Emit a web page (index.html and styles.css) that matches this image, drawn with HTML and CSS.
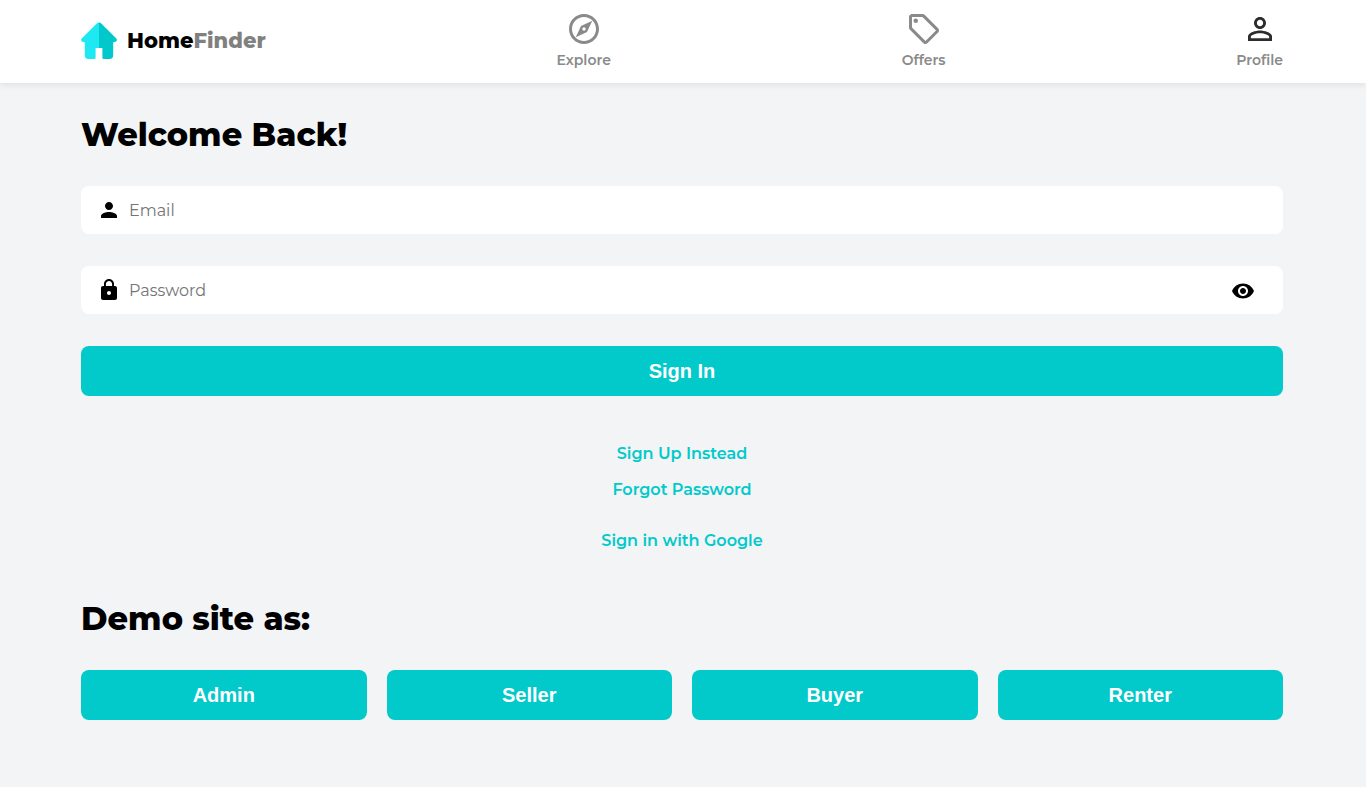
FILE: index.html
```html
<!DOCTYPE html>
<html lang="en">
<head>
<meta charset="utf-8">
<meta name="viewport" content="width=device-width, initial-scale=1">
<title>HomeFinder</title>
<link rel="stylesheet" href="styles.css">
</head>
<body>
<header class="site-header">
  <a class="brand" href="#">
    <svg class="brand-icon" viewBox="0 0 36 38" aria-hidden="true">
      <path fill="#1ee9f3" d="M18 .6c-1 0-1.800.4-2.500 1.100L.9 16.300c-1.300 1.300-.9 3 .6 3.500.7.3 1.400.4 2.300.4V33.500c0 2.200 1.400 3.500 3.500 3.500H13c1 0 1.600-.6 1.600-1.600v-9.300H18z"/>
      <path fill="#03c8cb" d="M18 .6c1 0 1.800.4 2.500 1.100l14.600 14.600c1.300 1.300.9 3-.6 3.500-.7.3-1.400.4-2.300.4V33.500c0 2.200-1.400 3.500-3.500 3.500H23c-1 0-1.600-.6-1.600-1.600v-9.300H18z"/>
    </svg>
    <span class="brand-name">Home<span class="brand-accent">Finder</span></span>
  </a>
  <a class="nav-link" href="#">
    <svg class="nav-icon" viewBox="0 0 24 24" aria-hidden="true"><path d="M12 2C6.480 2 2 6.480 2 12s4.480 10 10 10 10-4.480 10-10S17.520 2 12 2zm0 18c-4.410 0-8-3.590-8-8s3.590-8 8-8 8 3.590 8 8-3.590 8-8 8zm-5.500-2.500 7.510-3.490L17.500 6.500 9.990 9.990 6.500 17.500zm5.500-6.600c.61 0 1.100.49 1.100 1.100s-.49 1.100-1.100 1.100-1.100-.49-1.100-1.100.49-1.100 1.100-1.100z"/></svg>
    <span>Explore</span>
  </a>
  <a class="nav-link" href="#">
    <svg class="nav-icon" viewBox="0 0 24 24" aria-hidden="true"><path d="M21.410 11.580l-9-9C12.050 2.220 11.550 2 11 2H4c-1.100 0-2 .9-2 2v7c0 .55.22 1.050.59 1.420l9 9c.36.36.86.58 1.410.58s1.050-.22 1.410-.59l7-7c.37-.36.59-.86.59-1.410s-.23-1.060-.59-1.420zM13 20.010L4 11V4h7v-.01l9 9-7 7.020z"/><circle cx="6.500" cy="6.500" r="1.500"/></svg>
    <span>Offers</span>
  </a>
  <a class="nav-link" href="#" aria-current="page">
    <svg class="nav-icon nav-icon-active" viewBox="0 0 24 24" aria-hidden="true"><path d="M12 5.900c1.160 0 2.100.94 2.100 2.100s-.94 2.100-2.100 2.100S9.900 9.160 9.900 8s.94-2.100 2.100-2.100m0 9c2.970 0 6.100 1.460 6.100 2.100v1.100H5.900V17c0-.64 3.130-2.100 6.100-2.100M12 4C9.790 4 8 5.790 8 8s1.790 4 4 4 4-1.790 4-4-1.790-4-4-4zm0 9c-2.670 0-8 1.340-8 4v3h16v-3c0-2.660-5.330-4-8-4z"/></svg>
    <span>Profile</span>
  </a>
</header>

<main class="page">
  <h1 class="heading">Welcome Back!</h1>
  <form class="login">
    <div class="field">
      <svg class="field-icon" viewBox="0 0 24 24" aria-hidden="true"><path d="M12 12c2.210 0 4-1.790 4-4s-1.790-4-4-4-4 1.790-4 4 1.790 4 4 4zm0 2c-2.670 0-8 1.340-8 4v2h16v-2c0-2.660-5.330-4-8-4z"/></svg>
      <input class="field-input" type="email" placeholder="Email" aria-label="Email">
    </div>
    <div class="field">
      <svg class="field-icon" viewBox="0 0 24 24" aria-hidden="true"><path d="M18 8h-1V6c0-2.760-2.240-5-5-5S7 3.240 7 6v2H6c-1.100 0-2 .9-2 2v10c0 1.100.9 2 2 2h12c1.100 0 2-.9 2-2V10c0-1.100-.9-2-2-2zm-6 9c-1.100 0-2-.9-2-2s.9-2 2-2 2 .9 2 2-.9 2-2 2zm3.100-9H8.900V6c0-1.710 1.390-3.100 3.100-3.100s3.100 1.390 3.100 3.100v2z"/></svg>
      <input class="field-input" type="password" placeholder="Password" aria-label="Password">
      <button class="reveal" type="button" aria-label="Show password">
        <svg class="field-icon" viewBox="0 0 24 24" aria-hidden="true"><path d="M12 4.500C7 4.500 2.730 7.610 1 12c1.730 4.390 6 7.500 11 7.500s9.270-3.110 11-7.500c-1.730-4.390-6-7.500-11-7.500zM12 17c-2.760 0-5-2.240-5-5s2.240-5 5-5 5 2.240 5 5-2.240 5-5 5zm0-8c-1.660 0-3 1.340-3 3s1.340 3 3 3 3-1.340 3-3-1.340-3-3-3z"/></svg>
      </button>
    </div>
    <button class="button" type="submit">Sign In</button>
  </form>
  <div class="links">
    <a class="link" href="#">Sign Up Instead</a>
    <a class="link" href="#">Forgot Password</a>
    <a class="link link-google" href="#">Sign in with Google</a>
  </div>
  <h2 class="heading">Demo site as:</h2>
  <div class="demo">
    <button class="button" type="button">Admin</button>
    <button class="button" type="button">Seller</button>
    <button class="button" type="button">Buyer</button>
    <button class="button" type="button">Renter</button>
  </div>
</main>
</body>
</html>
```
FILE: styles.css
```css
* {
  box-sizing: border-box;
}

body {
  margin: 0;
  background: #f2f4f6;
  color: #000;
  font-family: Montserrat, Inter, sans-serif;
}

a {
  text-decoration: none;
}

svg {
  display: block;
  fill: currentColor;
}

.site-header {
  display: flex;
  justify-content: space-between;
  align-items: center;
  padding: 11px 83px 13px 81px;
  background: #fff;
  box-shadow: 0 2px 6px rgba(0, 0, 0, 0.08);
}

.brand {
  display: flex;
  align-items: center;
  gap: 10px;
  color: #000;
}

.brand-icon {
  width: 36px;
  height: 38px;
}

.brand-name {
  font-size: 21px;
  line-height: 28px;
  font-weight: 800;
}

.brand-accent {
  color: #808080;
}

.nav-link {
  display: flex;
  flex-direction: column;
  align-items: center;
  gap: 3px;
  color: #8a8a8a;
  font-size: 14px;
  line-height: 20px;
  font-weight: 600;
}

.nav-icon {
  width: 36px;
  height: 36px;
}

.nav-icon-active {
  color: #2c2c2c;
}

.page {
  padding: 32px 83px 67px 81px;
}

.heading {
  margin: 0 0 31px;
  font-size: 32px;
  line-height: 40px;
  font-weight: 800;
}

.login {
  display: flex;
  flex-direction: column;
  gap: 32px;
}

.field {
  display: flex;
  align-items: center;
  gap: 8px;
  height: 48px;
  padding: 0 28px 0 16px;
  border-radius: 8px;
  background: #fff;
}

.field-icon {
  flex: none;
  width: 24px;
  height: 24px;
}

.field-input {
  flex: 1;
  min-width: 0;
  height: 48px;
  padding: 0;
  border: 0;
  outline: 0;
  background: transparent;
  font-family: inherit;
  font-size: 16px;
}

.field-input::placeholder {
  color: #757575;
}

.reveal {
  padding: 2px 0 0;
  border: 0;
  background: transparent;
  color: #000;
  cursor: pointer;
}

.button {
  height: 50px;
  padding: 0 16px;
  border: 0;
  border-radius: 8px;
  background: #02c9ca;
  color: #fff;
  font-family: "Liberation Sans", Arial, sans-serif;
  font-size: 20px;
  font-weight: 700;
  cursor: pointer;
}

.links {
  display: flex;
  flex-direction: column;
  align-items: center;
  gap: 12px;
  margin: 46px 0;
}

.link {
  color: #02c9ca;
  font-size: 16px;
  line-height: 24px;
  font-weight: 600;
}

.link-google {
  margin-top: 15px;
}

.demo {
  display: grid;
  grid-template-columns: repeat(4, 1fr);
  gap: 20px;
}
```
